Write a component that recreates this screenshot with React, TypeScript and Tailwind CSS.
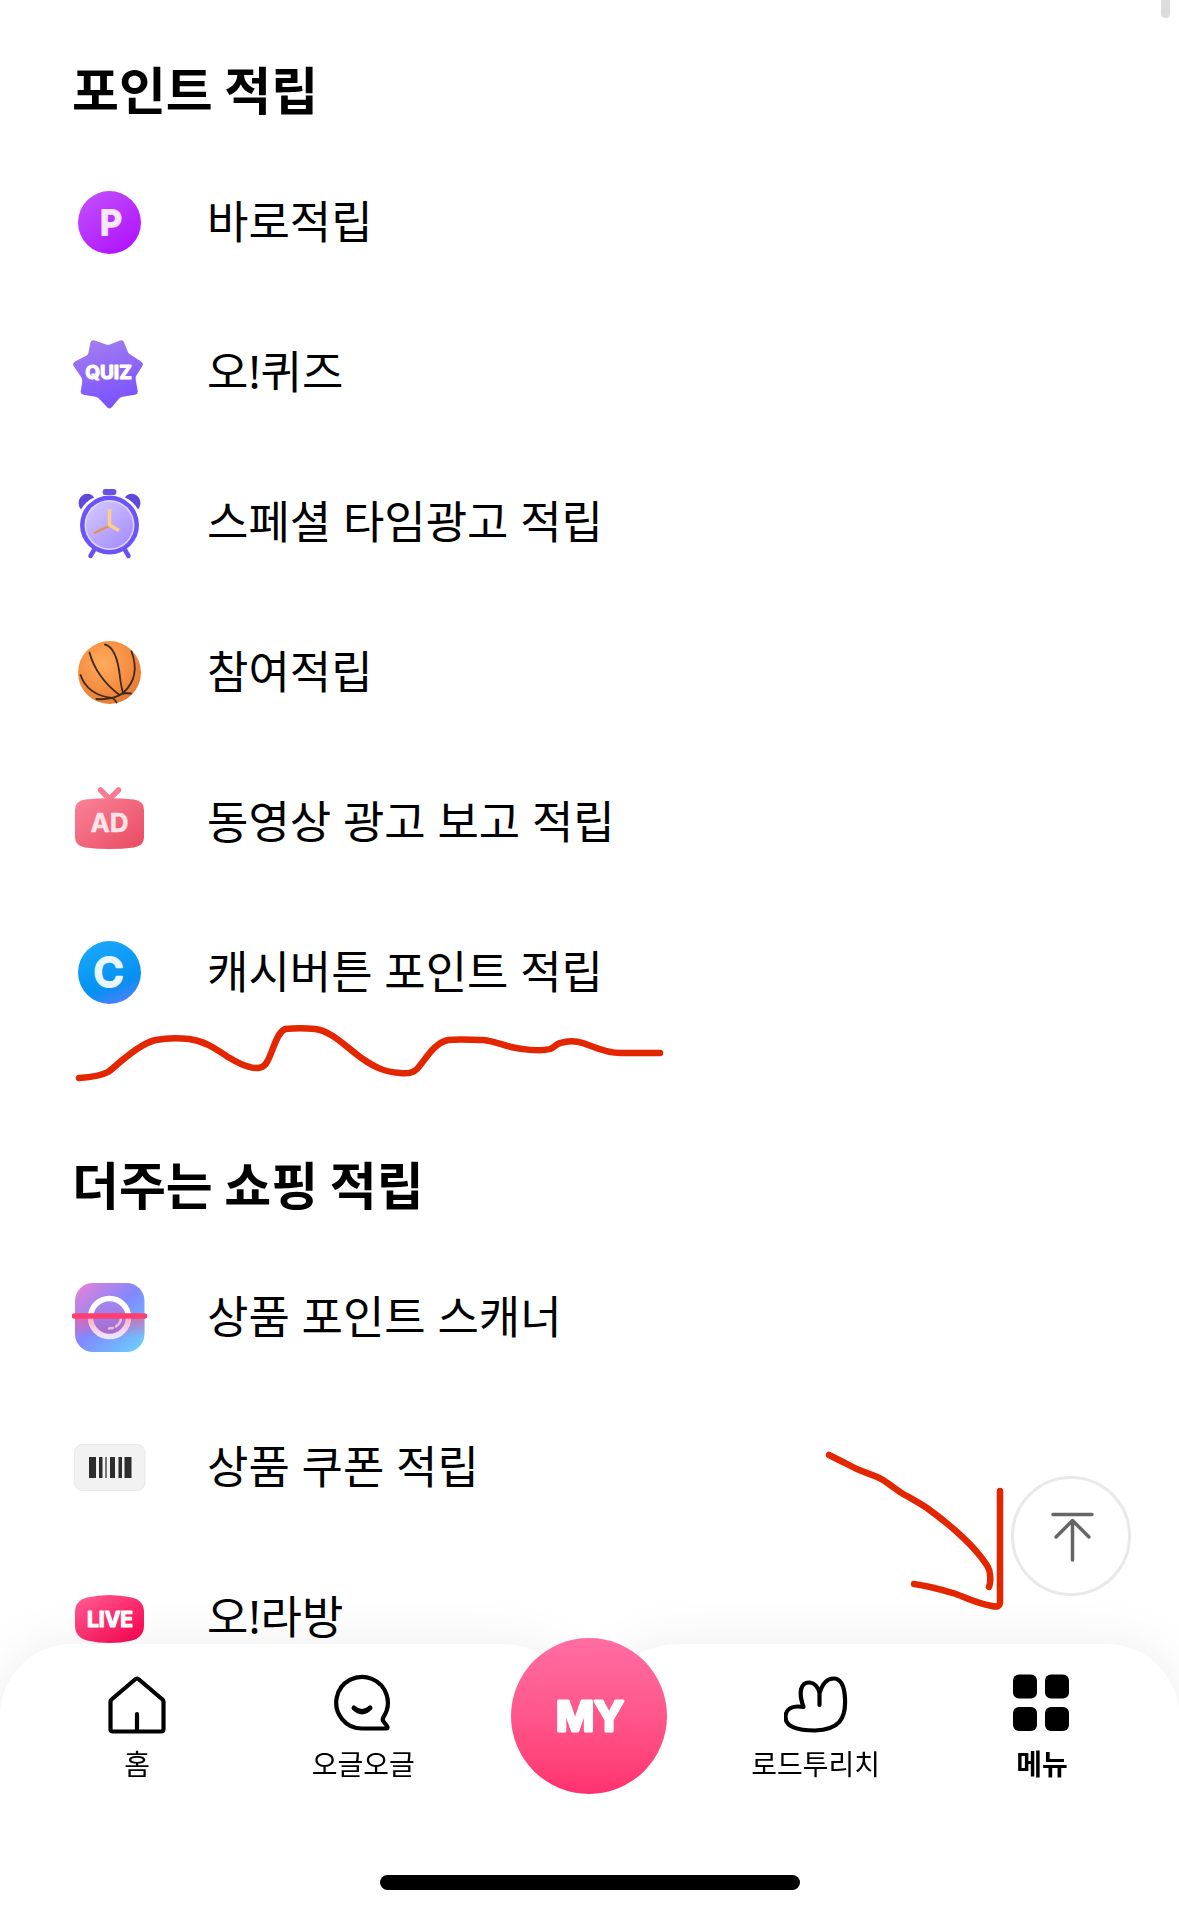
import React, { useState } from 'react';

type MenuItem = { label: string; icon: React.ReactNode };

const iconFont = 'font-["Inter",sans-serif] font-bold';

function Icon({ children }: { children: React.ReactNode }) {
  return (
    <svg viewBox="0 0 76 76" className="h-[76px] w-[76px] shrink-0" aria-hidden="true">
      {children}
    </svg>
  );
}

function PointIcon() {
  return (
    <Icon>
      <defs>
        <linearGradient id="point" x1="0.1" y1="0" x2="0.8" y2="1">
          <stop offset="0" stopColor="#c250ff" />
          <stop offset="1" stopColor="#b012fb" />
        </linearGradient>
      </defs>
      <circle cx="37.5" cy="38.5" r="31.5" fill="url(#point)" />
      <text x="39" y="51" textAnchor="middle" fontSize="34" fill="#f8e6ff" stroke="#f8e6ff" strokeWidth="2" strokeLinejoin="round" className='font-["Inter",sans-serif] font-semibold'>
        P
      </text>
    </Icon>
  );
}

function QuizIcon() {
  return (
    <Icon>
      <defs>
        <linearGradient id="quiz" x1="0.3" y1="0" x2="0.6" y2="1">
          <stop offset="0" stopColor="#9f7af0" />
          <stop offset="1" stopColor="#7a52ff" />
        </linearGradient>
      </defs>
      <path
        d="M21.5 9.5L33 13.5Q36 14.5 39 13.5L49 9.5L53 19.5Q54 22 57 23.5L67.5 30.5L61.5 40Q60 43 60.500 46L62.500 57.500L50 59.5Q46.500 60.300 44.5 62.5L37.500 71L29.5 62.500Q27.500 60.300 24 59.500L12 57.500L13.500 48Q13.700 44 12 41.5L4.500 30.500L16 24.5Q18.500 23 19.5 20Z"
        fill="url(#quiz)"
        stroke="url(#quiz)"
        strokeWidth="6.5"
        strokeLinejoin="round"
      />
      <text x="36.500" y="45" textAnchor="middle" fontSize="19" fill="#fff" stroke="#fff" strokeWidth="1.2" strokeLinejoin="round" className={iconFont}>
        QUIZ
      </text>
    </Icon>
  );
}

function ClockIcon() {
  return (
    <Icon>
      <defs>
        <linearGradient id="face" x1="0.1" y1="0" x2="0.9" y2="1">
          <stop offset="0" stopColor="#d4c8ff" />
          <stop offset="1" stopColor="#a28bff" />
        </linearGradient>
      </defs>
      <path d="M22 66L18.500 72M53 66L56.500 72" stroke="#6a50ee" strokeWidth="4.500" strokeLinecap="round" />
      <rect x="30.700" y="5" width="13.600" height="6" rx="2.500" fill="#6a4fe0" />
      <path d="M9 25.500C5 21 6 13 12 10.500C16 9 20 10 22 13.500C16 16 12 20 9 25.500Z" fill="#6048dc" />
      <path d="M66 25.500C70 21 69 13 63 10.500C59 9 55 10 53 13.500C59 16 63 20 66 25.500Z" fill="#6048dc" />
      <circle cx="37.500" cy="41" r="29.500" fill="#6c54fb" />
      <circle cx="37.500" cy="41" r="25" fill="#e0d8ff" />
      <circle cx="37.500" cy="41" r="23.500" fill="url(#face)" />
      <path d="M37 42L22.500 49" stroke="#e8913f" strokeWidth="2" strokeLinecap="round" />
      <path d="M37.500 25V41L47 46.500" fill="none" stroke="#ffcd85" strokeWidth="3.500" strokeLinejoin="round" />
    </Icon>
  );
}

function BallIcon() {
  return (
    <Icon>
      <defs>
        <radialGradient id="ball" cx="0.4" cy="0.35" r="0.7">
          <stop offset="0" stopColor="#ffac5c" />
          <stop offset="0.6" stopColor="#f58e42" />
          <stop offset="1" stopColor="#e47a35" />
        </radialGradient>
      </defs>
      <circle cx="37.500" cy="38.500" r="31.500" fill="url(#ball)" />
      <g fill="none" stroke="#3d2a1c" strokeWidth="1.800" strokeLinecap="round">
        <path d="M17.500 18.500C22 36 34 51 47 60.500" />
        <path d="M33 10.500C44 13 47 34 48 43C48.800 50 50 56 51.500 60" />
        <path d="M59.500 17.500C65 32 64 47 51.500 58.500C45 64 34 66 24.500 65" />
        <path d="M8.500 41C13 54 24 62 40 64Q43 65 44.500 68.500" />
        <path d="M51 59L59 59.500" />
      </g>
    </Icon>
  );
}

function AdIcon() {
  return (
    <Icon>
      <defs>
        <linearGradient id="ad" x1="0" y1="0" x2="1" y2="1">
          <stop offset="0" stopColor="#fb8299" />
          <stop offset="1" stopColor="#e84b60" />
        </linearGradient>
      </defs>
      <path d="M28.500 6L37.500 15L46.500 6" fill="none" stroke="#f87b91" strokeWidth="5.500" strokeLinecap="round" />
      <path d="M13 15.500Q37.500 13 62 15.500Q72 17 72 26V53Q72 62 62 63.500Q37.500 66.500 13 63.500Q3 62 3 53V26Q3 17 13 15.500Z" fill="url(#ad)" />
      <text x="37.500" y="48" textAnchor="middle" fontSize="26" fill="#ffe3e9" stroke="#ffe3e9" strokeWidth="0.500" className={iconFont}>
        AD
      </text>
    </Icon>
  );
}

function CashIcon() {
  return (
    <Icon>
      <defs>
        <linearGradient id="cash" x1="0.3" y1="0" x2="0.7" y2="1">
          <stop offset="0" stopColor="#18a8fb" />
          <stop offset="0.700" stopColor="#0690f0" />
          <stop offset="1" stopColor="#5180ff" />
        </linearGradient>
      </defs>
      <circle cx="37.500" cy="38.500" r="31.500" fill="url(#cash)" />
      <text x="36.500" y="53" textAnchor="middle" fontSize="41" fill="#e8f6ff" stroke="#e8f6ff" strokeWidth="2" strokeLinejoin="round" className='font-["Inter",sans-serif] font-semibold'>
        C
      </text>
    </Icon>
  );
}

function ScannerIcon() {
  return (
    <Icon>
      <defs>
        <linearGradient id="scan" x1="0" y1="0" x2="0.9" y2="1">
          <stop offset="0" stopColor="#ec80d2" />
          <stop offset="0.500" stopColor="#8088ff" />
          <stop offset="1" stopColor="#6ccdff" />
        </linearGradient>
        <linearGradient id="lens" x1="0" y1="0" x2="0" y2="1">
          <stop offset="0" stopColor="#a08cf6" />
          <stop offset="1" stopColor="#a868c8" />
        </linearGradient>
        <linearGradient id="ring" x1="0" y1="0" x2="0" y2="1">
          <stop offset="0.500" stopColor="#fff" />
          <stop offset="0.550" stopColor="#ffb4c4" />
          <stop offset="1" stopColor="#efe4ff" />
        </linearGradient>
        <linearGradient id="beam" x1="0" y1="0" x2="0" y2="1">
          <stop offset="0" stopColor="#ff4f86" stopOpacity="0.600" />
          <stop offset="1" stopColor="#ff4f86" stopOpacity="0" />
        </linearGradient>
      </defs>
      <rect x="3" y="4" width="69.500" height="69" rx="18" fill="url(#scan)" />
      <rect x="3" y="37" width="69.500" height="22" fill="url(#beam)" />
      <circle cx="37.500" cy="38.500" r="19" fill="url(#lens)" stroke="url(#ring)" strokeWidth="5.5" />
      <path d="M37 49.500L41 49M44 47.500Q49 44 49 39" fill="none" stroke="#f3b6dc" strokeWidth="2.500" strokeLinecap="round" />
      <path d="M2.500 37H72.500" stroke="#ff3d6e" strokeWidth="5.500" strokeLinecap="round" />
    </Icon>
  );
}

function CouponIcon() {
  return (
    <Icon>
      <rect x="2.500" y="15.500" width="70.5" height="46" rx="8" fill="#f2f2f2" stroke="#e9e9e9" />
      <g fill="#2d2d2d">
        <rect x="17" y="28" width="7" height="21" />
        <rect x="27" y="28" width="3.500" height="21" />
        <rect x="33" y="28" width="2" height="21" fill="#777" />
        <rect x="38" y="28" width="5" height="21" />
        <rect x="46.500" y="28" width="3.500" height="21" />
        <rect x="52.500" y="28" width="7" height="21" />
      </g>
    </Icon>
  );
}

function LiveIcon() {
  return (
    <Icon>
      <defs>
        <linearGradient id="live" x1="0" y1="0" x2="1" y2="1">
          <stop offset="0.100" stopColor="#ff558c" />
          <stop offset="1" stopColor="#fa004f" />
        </linearGradient>
      </defs>
      <path d="M15 18.500Q37.500 13.500 60 18.500Q72 21.500 72 33V46.500Q72 58 60 61.500Q37.500 66.500 15 61.500Q3 58 3 46.500V33Q3 21.500 15 18.500Z" fill="url(#live)" />
      <text x="38" y="48" textAnchor="middle" fontSize="21" fill="#fff" stroke="#fff" strokeWidth="1.2" strokeLinejoin="round" className={iconFont}>
        LIVE
      </text>
    </Icon>
  );
}

const sections: { title: string; items: MenuItem[] }[] = [
  {
    title: '포인트 적립',
    items: [
      { label: '바로적립', icon: <PointIcon /> },
      { label: '오!퀴즈', icon: <QuizIcon /> },
      { label: '스페셜 타임광고 적립', icon: <ClockIcon /> },
      { label: '참여적립', icon: <BallIcon /> },
      { label: '동영상 광고 보고 적립', icon: <AdIcon /> },
      { label: '캐시버튼 포인트 적립', icon: <CashIcon /> },
    ],
  },
  {
    title: '더주는 쇼핑 적립',
    items: [
      { label: '상품 포인트 스캐너', icon: <ScannerIcon /> },
      { label: '상품 쿠폰 적립', icon: <CouponIcon /> },
      { label: '오!라방', icon: <LiveIcon /> },
    ],
  },
];

const tabs = [
  {
    id: 'home',
    label: '홈',
    icon: <path d="M32 6.500Q33 6.500 34 7.500L57.500 27.500Q58.500 28.500 58.500 30V57Q58.500 59.500 56 59.500H8Q5.500 59.500 5.500 57V30Q5.500 28.500 6.500 27.500L30 7.500Q31 6.500 32 6.500ZM32 42V59" />,
  },
  {
    id: 'talk',
    label: '오글오글',
    icon: (
      <>
        <path d="M31 56.500A25.800 25.800 0 1 1 52.500 45Q51 47.500 52.500 49.500L56 54Q57.500 56.500 55 56.500H31" />
        <path d="M23 36Q31 43.500 39 36" strokeWidth="5" />
      </>
    ),
  },
  { id: 'my', label: 'MY', icon: null },
  {
    id: 'rich',
    label: '로드투리치',
    icon: <path d="M35.500 33V21C39 10 44 6.500 49.500 6.500C57 6.500 60.500 14 61 27C62 47 55 57.500 31 58.500C12 58.500 1.500 54 1.500 45C1.500 37 8 33 19.500 35C14 20 17 10.500 25 10.500C30 10.500 34 15 35.500 21" />,
  },
  {
    id: 'menu',
    label: '메뉴',
    icon: (
      <g fill="#000" stroke="none">
        <rect x="3" y="2.500" width="24" height="24" rx="6" />
        <rect x="35" y="2.500" width="24" height="24" rx="6" />
        <rect x="3" y="35" width="24" height="24" rx="6" />
        <rect x="35" y="35" width="24" height="24" rx="6" />
      </g>
    ),
  },
];

// hand-drawn marks lying over the list
function Marks() {
  return (
    <svg
      viewBox="0 0 1179 1914"
      className="pointer-events-none absolute top-0 left-0 z-20 h-[1914px] w-[1179px]"
      fill="none"
      stroke="#e42600"
      strokeWidth="6.500"
      strokeLinecap="round"
      strokeLinejoin="round"
      aria-hidden="true"
    >
      <path d="M79 1078C92 1077 101 1076 108 1072C114 1068 118 1063 125 1058C136 1049 146 1042 156 1040C166 1038 180 1038 189 1039C205 1041 216 1049 228 1057C238 1063 244 1066 250 1067C257 1069 264 1068 267 1062C273 1052 276 1033 285 1029C294 1028 306 1028 315 1029C331 1031 344 1045 360 1057C374 1067 384 1072 400 1073C408 1074 413 1073 417 1069C426 1059 434 1043 448 1040C460 1039 472 1040 483 1040C494 1041 502 1045 511 1047C520 1049 540 1052 550 1049C555 1047 556 1044 560 1043C567 1041 576 1041 583 1043C593 1046 604 1053 621 1053H660" />
      <path d="M829 1455L845 1463C864 1474 871 1473 883 1480C889 1484 893 1487 900 1492C910 1498 918 1502 927 1508C938 1516 948 1524 957 1532C967 1541 974 1548 981 1557C987 1565 990 1569 990 1575Q991 1582 989 1587" />
      <path d="M914 1584C928 1586 939 1589 953 1593C965 1597 974 1603 992 1606Q1000 1608 1000 1602V1491" />
    </svg>
  );
}

export default function App() {
  const [active, setActive] = useState('menu');

  return (
    <div className='relative min-h-screen overflow-x-hidden bg-white font-["Noto_Sans_CJK_KR",sans-serif] text-black'>
      <div className="absolute top-0 right-[9px] h-[18px] w-[9px] rounded-b-full bg-[#dcdcdc]" />

      <main className="flex flex-col gap-[106px] px-[72px] pt-[58px]">
        {sections.map((section) => (
          <section key={section.title}>
            <h2 className="mb-[29px] text-[51px] leading-[60px] font-bold">{section.title}</h2>
            <ul className='font-["Noto_Sans","Noto_Sans_CJK_KR",sans-serif]'>
              {section.items.map((item) => (
                <li key={item.label}>
                  <a href="#" className="flex h-[150px] items-center gap-[59px] text-[45px] leading-[60px]">
                    {item.icon}
                    <span>{item.label}</span>
                  </a>
                </li>
              ))}
            </ul>
          </section>
        ))}
      </main>

      <button
        type="button"
        aria-label="맨 위로"
        onClick={() => window.scrollTo({ top: 0, behavior: 'smooth' })}
        className="fixed right-12 bottom-[318px] z-10 flex h-[120px] w-[120px] items-center justify-center rounded-full border-[3px] border-[#e8e9eb] bg-white"
      >
        <svg viewBox="0 0 60 60" className="h-[60px] w-[60px]" fill="none" stroke="#666" strokeWidth="3.500" strokeLinecap="round" strokeLinejoin="round">
          <path d="M12 8.500H51M31.5 54V14.500M15 31L31.5 14.500L48 31" />
        </svg>
      </button>

      <nav className="fixed inset-x-0 bottom-0 z-10 h-[270px]">
        <div className="absolute inset-0 flex drop-shadow-[0_0_24px_rgba(0,0,0,0.07)]">
          <div className="flex-1 rounded-tl-[72px] rounded-tr-[90px] bg-white" />
          <div className="flex-1 rounded-tl-[90px] rounded-tr-[72px] bg-white" />
        </div>
        <div className="relative flex h-full flex-col justify-between px-6 pb-6">
          <div className="grid grid-cols-5">
            {tabs.map((tab) =>
              tab.id === 'my' ? (
                <div key={tab.id} className="-mt-1.5 flex justify-center">
                  <button
                    type="button"
                    onClick={() => setActive(tab.id)}
                    className="h-[156px] w-[156px] rounded-full bg-linear-to-b from-[#ff6da2] via-[#ff568b] to-[#ff306f]"
                  >
                    <svg viewBox="0 0 156 156" className="h-full w-full">
                      <text x="79" y="93" textAnchor="middle" fontSize="41" fill="#fff" stroke="#fff" strokeWidth="3" strokeLinejoin="round" className={iconFont}>
                        MY
                      </text>
                    </svg>
                  </button>
                </div>
              ) : (
                <button
                  key={tab.id}
                  type="button"
                  onClick={() => setActive(tab.id)}
                  className="flex flex-col items-center gap-[11px] pt-7"
                >
                  <svg viewBox="0 0 64 64" className="h-16 w-16" fill="none" stroke="#000" strokeWidth="4.200" strokeLinecap="round" strokeLinejoin="round">
                    {tab.icon}
                  </svg>
                  <span className={active === tab.id ? 'text-[28px] leading-8 font-bold' : 'text-[28px] leading-8'}>
                    {tab.label}
                  </span>
                </button>
              )
            )}
          </div>
          <div className="h-[15px] w-[420px] self-center rounded-full bg-black" />
        </div>
      </nav>

      <Marks />
    </div>
  );
}
